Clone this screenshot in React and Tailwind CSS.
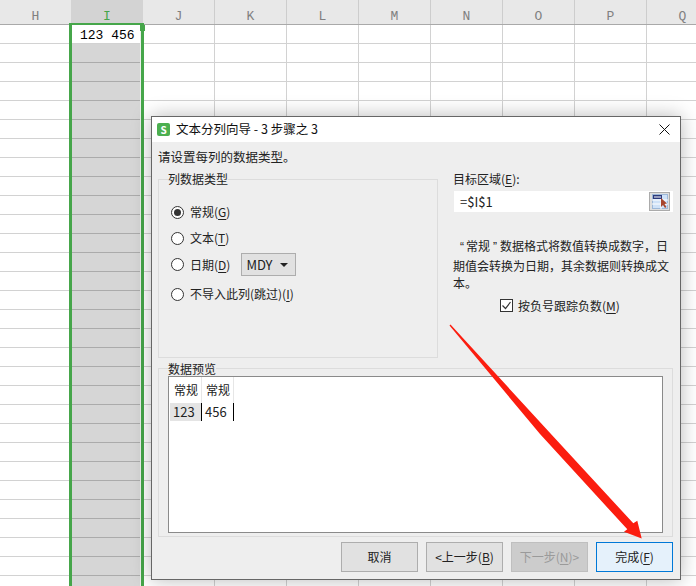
const columns = [
  { label: "H", w: "w-[71px]", edge: "" },
  { label: "I", w: "w-[72px]", edge: "" },
  { label: "J", w: "w-[72px]", edge: "border-r" },
  { label: "K", w: "w-[72px]", edge: "border-r" },
  { label: "L", w: "w-[72px]", edge: "border-r" },
  { label: "M", w: "w-[72px]", edge: "border-r" },
  { label: "N", w: "w-[72px]", edge: "border-r" },
  { label: "O", w: "w-[72px]", edge: "border-r" },
  { label: "P", w: "w-[72px]", edge: "border-r" },
  { label: "Q", w: "w-[72px]", edge: "border-r" },
];

const rows = Array.from({ length: 30 }, (_, i) => i);

function Key({ children }) {
  return <span className="underline underline-offset-2">{children}</span>;
}

function Radio({ checked, children, className = "" }) {
  return (
    <div className={`flex items-center gap-[6px] h-[18px] ${className}`}>
      <span className="w-[13px] h-[13px] rounded-full border border-[#333] bg-white flex items-center justify-center shrink-0">
        {checked && <span className="w-[7px] h-[7px] rounded-full bg-[#333]" />}
      </span>
      <span className="whitespace-nowrap">{children}</span>
    </div>
  );
}

function Btn({ children, className = "" }) {
  return (
    <div className={`w-[77px] h-[30px] flex items-center justify-center border ${className}`}>{children}</div>
  );
}

function RangeIcon() {
  return (
    <svg width="16" height="15" viewBox="0 0 16 15">
      <rect x="0.5" y="0.5" width="15" height="14" fill="#cfe2f8" stroke="#9db8d8" />
      <rect x="1" y="1" width="9" height="4" fill="#2d3a7c" />
      <rect x="2" y="2.5" width="7" height="1" fill="#fff" />
      <path d="M0 6h16M0 10h16M9 5v10" stroke="#fff" />
      <path d="M9 4l0 9 2-2 2 3 1.5-1-2-3 2.5-.5z" fill="#a8452c" />
    </svg>
  );
}

export default function App() {
  return (
    <div className="relative w-[696px] h-[586px] overflow-hidden bg-white font-['Noto_Sans_CJK_SC',sans-serif] text-xs text-[#222]">
      {/* column headers */}
      <div className="flex h-[25px] w-[800px] bg-[#e8e8e8] border-b border-[#a9a9a9] font-['Liberation_Mono',monospace] text-[13px] text-[#808080]">
        {columns.map((c) => (
          <div
            key={c.label}
            className={`${c.w} shrink-0 flex items-center justify-center pt-[9px] ${c.edge} border-[#cdcdcd] ${c.label === "I" ? "bg-[#d3d3d3] text-[#46a64a]" : ""}`}
          >
            {c.label}
          </div>
        ))}
      </div>
      {/* sheet rows */}
      {rows.map((r) => (
        <div key={r} className="flex h-[19px] w-[800px]">
          {columns.map((c) => {
            const sel = c.label === "I" && r > 0;
            return (
              <div
                key={c.label}
                className={`${c.w} shrink-0 border-b ${c.edge} border-[#d2d2d2] ${sel ? "bg-[#d6d6d6] border-b-[#ababab]" : ""}`}
              >
                {c.label === "I" && r === 0 && (
                  <div className="pl-[9px] pt-[1px] font-['Liberation_Mono',monospace] text-[13px] leading-[19px] text-black whitespace-pre">123 456</div>
                )}
              </div>
            );
          })}
        </div>
      ))}
      {/* selection frame */}
      <div className="absolute left-[69px] top-[23px] bottom-0 w-[75px] border-x-[3px] border-t-2 border-[#46a64a] shadow-[inset_-1px_0_0_#eeeeee]" />
      <div className="absolute left-[140px] top-[25px] w-[5px] h-[6px] bg-[#46a64a]" />

      {/* dialog */}
      <div className="absolute left-[151px] top-[116px] w-[530px] h-[464px] bg-[#eeeeee] border border-[#666] shadow-[0_0_18px_rgba(0,0,0,0.28)] flex flex-col">
        <div className="h-[25px] bg-white flex items-center pl-[5px] pr-[10px] shrink-0">
          <span className="w-[13px] h-[13px] rounded-[2px] bg-[#4caf50] text-white text-[10px] font-bold leading-[13px] text-center">S</span>
          <span className="ml-[6px] text-[12.5px] text-[#111] whitespace-pre">文本分列向导 - 3 步骤之 3</span>
          <svg className="ml-auto" width="11" height="11" viewBox="0 0 11 11">
            <path d="M0.5 0.5l10 10M10.5 0.5l-10 10" stroke="#111" strokeWidth="1" />
          </svg>
        </div>

        <div className="flex-1 pl-[6px] pr-[7px] flex flex-col">
          <div className="h-[18px] mt-[6px] leading-[18px] text-[12.5px]">请设置每列的数据类型。</div>
          <div className="flex mt-[4px] h-[188px]">
            <fieldset className="w-[280px] h-[188px] border border-[#dcdcdc] pl-[12px]">
              <legend className="ml-[-3px] h-[18px] leading-[18px] text-[12px]">列数据类型</legend>
              <Radio checked className="mt-[15px]">常规(<Key>G</Key>)</Radio>
              <Radio className="mt-[8px]">文本(<Key>T</Key>)</Radio>
              <div className="flex items-center mt-[6px]">
                <Radio>日期(<Key>D</Key>)</Radio>
                <div className="ml-[11px] w-[55px] h-[23px] bg-[#e1e1e1] border border-[#adadad] flex items-center pl-[4px] text-[13px]">
                  <span>MDY</span>
                  <svg className="ml-[7px]" width="8" height="4" viewBox="0 0 8 4">
                    <path d="M0 0h8L4 4z" fill="#222" />
                  </svg>
                </div>
              </div>
              <Radio className="mt-[9px]">不导入此列(跳过)(<Key>I</Key>)</Radio>
            </fieldset>

            <div className="ml-[15px] w-[220px] flex flex-col">
              <div className="h-[18px] leading-[18px]">目标区域(<Key>E</Key>):</div>
              <div className="ml-[1px] mt-[3px] h-[21px] bg-white flex items-center pl-[6px] pr-[3px]">
                <span className="text-[13px]">=$I$1</span>
                <span className="ml-auto w-[21px] h-[19px] bg-[#dfdfdf] border border-[#ababab] flex items-center justify-center">
                  <RangeIcon />
                </span>
              </div>
              <div className="mt-[25px] leading-[17.5px] whitespace-nowrap">
                <div className="pl-[7px]">
                  <span className="font-['Liberation_Sans',sans-serif] mr-[2px]">“</span>常规<span className="font-['Liberation_Sans',sans-serif] ml-[3px] mr-[3px]">”</span>数据格式将数值转换成数字，日
                </div>
                <div>期值会转换为日期，其余数据则转换成文</div>
                <div>本。</div>
              </div>
              <div className="mt-[5px] ml-[47px] flex items-center gap-[5px] h-[18px]">
                <span className="w-[13px] h-[13px] border border-[#333] bg-white flex items-center justify-center">
                  <svg width="11" height="11" viewBox="0 0 11 11">
                    <path d="M1.5 5.5l3 3 5-6.5" fill="none" stroke="#333" strokeWidth="1.2" />
                  </svg>
                </span>
                <span>按负号跟踪负数(<Key>M</Key>)</span>
              </div>
            </div>
          </div>

          <fieldset className="mt-[2px] w-[515px] h-[177px] border border-[#dcdcdc] px-[9px]">
            <legend className="ml-0 h-[16px] leading-[16px] pt-[1px]">数据预览</legend>
            <div className="h-[157px] bg-white border border-[#8a8a8a] pl-[1px]">
              <div className="flex h-[26px] text-[12px]">
                <div className="w-[32px] border-r border-[#e6e6e6] flex items-center pl-[4px]">常规</div>
                <div className="w-[32px] border-r border-[#e6e6e6] flex items-center pl-[4px]">常规</div>
              </div>
              <div className="flex h-[18px] text-[13px]">
                <div className="w-[32px] border-r border-black bg-[#e4e4e4] flex items-center pl-[3px]">123</div>
                <div className="w-[32px] border-r border-black flex items-center pl-[3px]">456</div>
              </div>
            </div>
          </fieldset>

          <div className="mt-[5px] w-[515px] flex justify-end gap-[8px]">
            <Btn className="bg-[#e1e1e1] border-[#adadad]">取消</Btn>
            <Btn className="bg-[#e1e1e1] border-[#adadad]">&lt;上一步(<Key>B</Key>)</Btn>
            <Btn className="bg-[#cccccc] border-[#bfbfbf] text-[#9a9a9a]">下一步(<Key>N</Key>)&gt;</Btn>
            <Btn className="bg-[#e5f1fb] border-[#0078d7]">完成(<Key>F</Key>)</Btn>
          </div>
        </div>
      </div>

      {/* red annotation arrow */}
      <svg className="absolute left-0 top-0 pointer-events-none" width="696" height="586" viewBox="0 0 696 586">
        <path d="M450.5 324.5L547.3 430L633.3 523.3L637.3 520.7L641.7 538.5L624 531.7L627.3 529.3L540 434L449.5 325.5Z" fill="#fb1d0f" />
      </svg>
    </div>
  );
}
